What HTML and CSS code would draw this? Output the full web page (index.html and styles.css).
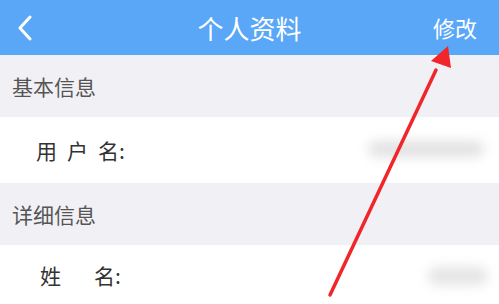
FILE: index.html
```html
<!DOCTYPE html>
<html>
<head>
<meta charset="utf-8">
<link rel="stylesheet" href="styles.css">
</head>
<body>
<div class="page">
  <header class="topbar">
    <svg class="back" width="16" height="26" viewBox="0 0 16 26"><path d="M13 2 L3 13 L13 24" fill="none" stroke="#fff" stroke-width="3" stroke-linecap="round" stroke-linejoin="round"/></svg>
    <div class="title">个人资料</div>
    <div class="edit">修改</div>
  </header>
  <div class="section">基本信息</div>
  <div class="row">
    <span class="label l1"><span>用</span><span>户</span><span>名:</span></span>
    <span class="blur v1"></span>
  </div>
  <div class="section">详细信息</div>
  <div class="row row2">
    <span class="label l2"><span>姓</span><span>名:</span></span>
    <span class="blur v2"></span>
  </div>
  <svg class="arrow" width="499" height="304" viewBox="0 0 499 304">
    <line x1="330" y1="295" x2="436" y2="70" stroke="#f0262b" stroke-width="3.5" stroke-linecap="round"/>
    <polygon points="448,46 451,68 431,61" fill="#f0262b"/>
  </svg>
</div>
</body>
</html>
```
FILE: styles.css
```css
html, body { margin: 0; padding: 0; }
body {
  width: 499px; height: 304px; overflow: hidden;
  font-family: "Noto Sans CJK SC", "Noto Sans", sans-serif;
  background: #fff;
}
.page { position: relative; width: 499px; height: 304px; }
.topbar {
  height: 55px; background: #59a7f6;
  display: flex; align-items: center; position: relative;
  padding: 0 22px 0 17px;
}
.back { display: block; }
.title {
  position: absolute; left: 0; right: 0; text-align: center;
  color: #fff; font-size: 26px; line-height: 55px; top: 0;
}
.edit { margin-left: auto; color: #fff; font-size: 22px; position: relative; top: -1px; }
.section {
  height: 62px; background: #f1f1f5; color: #555;
  font-size: 21px; display: flex; align-items: center; padding-left: 12px;
}
.row {
  height: 66px; background: #fff; display: flex; align-items: center;
  padding-left: 36px; position: relative;
}
.row2 { height: 59px; padding-left: 40px; }
.label { font-size: 21px; color: #333; display: flex; }
.l1 { gap: 10px; }
.l2 { gap: 33px; }
.blur {
  position: absolute; background: #cfcfcf; filter: blur(6px); border-radius: 10px;
}
.v1 { left: 368px; top: 24px; width: 116px; height: 16px; opacity: 0.6; }
.v2 { left: 428px; top: 22px; width: 60px; height: 18px; opacity: 0.55; }
.arrow { position: absolute; left: 0; top: 0; }
```
